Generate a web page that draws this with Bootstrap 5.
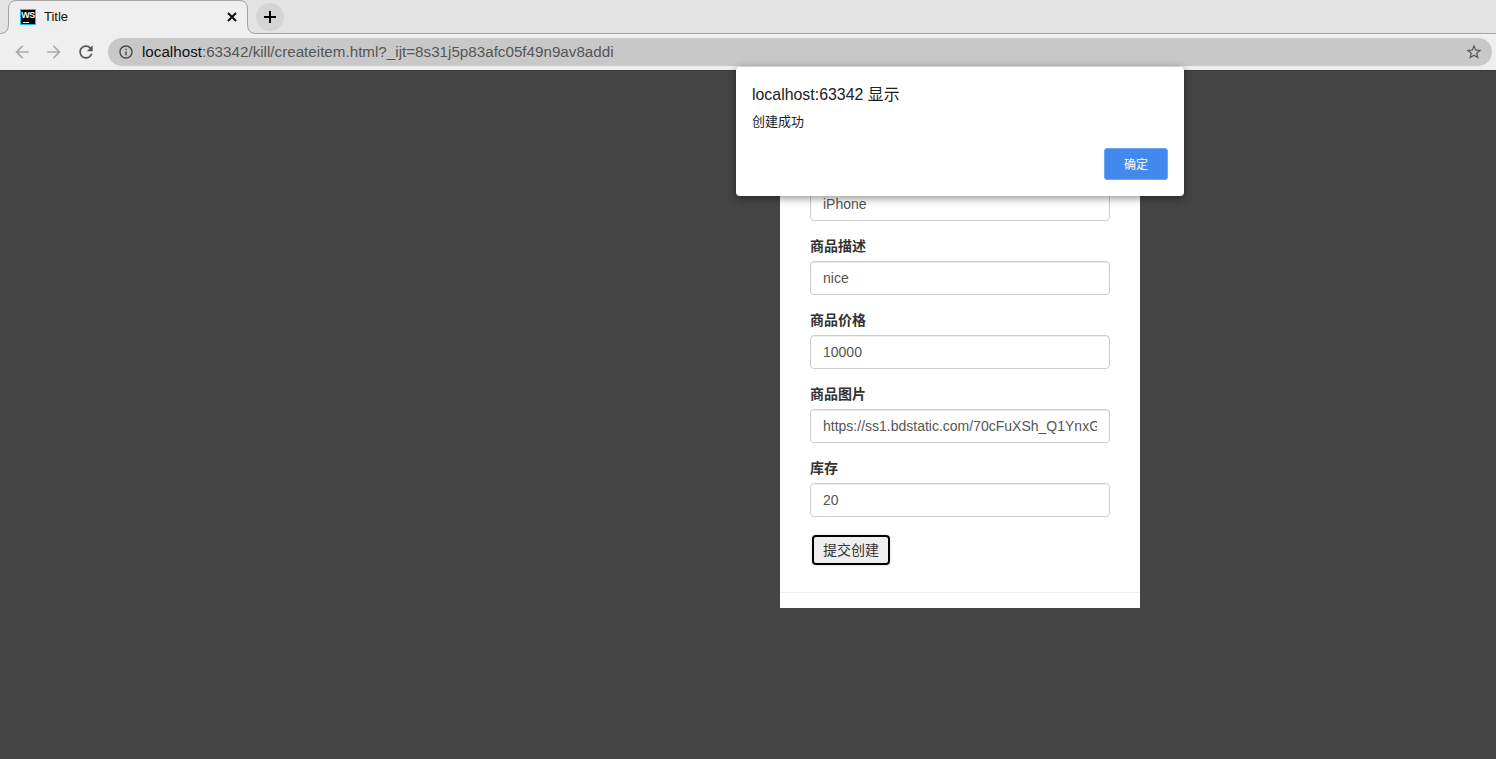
<!DOCTYPE html>
<html lang="zh-CN">

<head>
  <meta charset="UTF-8">
  <meta name="viewport" content="width=device-width, initial-scale=1.0">
  <title>Title</title>
  <link href="https://cdn.jsdelivr.net/npm/bootstrap@5.3.3/dist/css/bootstrap.min.css" rel="stylesheet">
  <style>
    body {
      background: #444;
      font-family: "Liberation Sans", "Noto Sans CJK SC", sans-serif;
      font-size: 14px;
      color: #333;
      overflow: hidden;
    }

    /* browser frame */
    .tab-strip { height: 34px; background: #e3e3e3; padding-left: 0; }
    .strip-tab { position: relative; width: 256px; height: 34px; flex: none; }
    .strip-tab svg.tab-shape { position: absolute; left: 0; top: 0; }
    .strip-rest { flex: 1; height: 34px; border-bottom: 1px solid #a3a3a3; }
    .tab-inner { position: relative; height: 34px; padding: 0 19px 0 20px; }
    .tab-icon {
      width: 16px; height: 16px; background: #000; border: 1px solid #12c3f4; flex: none;
      color: #fff; font-size: 9px; font-weight: 700; line-height: 10px; text-align: center;
      position: relative; letter-spacing: -.4px;
    }
    .tab-icon::after {
      content: ""; position: absolute; left: 2px; bottom: 1px; width: 6px; height: 1px; background: #fff;
    }
    .tab-title { margin-left: 8px; font-size: 13px; color: #111; }
    .tab-new {
      width: 28px; height: 28px; background: #d4d4d4; border-radius: 50%; margin-top: 1px; flex: none;
    }
    .tool-bar { height: 37px; background: #efefef; border-bottom: 1px solid #3a3a3a; padding: 0 4px 0 6px; }
    .tool-btn { width: 32px; flex: none; }
    .url-pill { height: 28px; background: #c8c8c8; border-radius: 14px; margin-left: 6px; padding: 0 9px 0 10px; }
    .url-text { margin-left: 8px; font-size: 15.2px; color: #111; white-space: nowrap; }
    .url-text span { color: #555; }

    /* page */
    .page-body { height: 688px; padding-top: 61px; }
    .form-panel { width: 360px; margin-left: 780px; border: 0; border-radius: 0; }
    .form-panel .card-body { padding: 30px 30px 27px; }
    .form-panel .card-footer { height: 16px; padding: 0; background: #fff; border-top: 1px solid #eee; border-radius: 0; }
    .field-row { margin-bottom: 15px; }
    .field-row .form-label { display: block; margin-bottom: 5px; font-weight: 700; line-height: 20px; font-size: 14px; color: #333; }
    .field-row .form-control {
      height: 34px; padding: 6px 12px; font-size: 14px; line-height: 20px; color: #555;
      border: 1px solid #ccc; border-radius: 4px; box-shadow: inset 0 1px 1px rgba(0, 0, 0, .075);
    }
    .create-btn {
      display: block; width: 78px; height: 30px; margin: 18px 2px 0; padding: 3px 0; font-size: 14px; line-height: 20px;
      color: #333; background: #efefef; border: 2px solid #000; border-radius: 4px; box-shadow: 0 0 0 2px #f5f5f5;
    }

    /* alert dialog */
    .alert-box {
      position: absolute; left: 736px; top: 67px; width: 448px; height: 129px; padding: 16px;
      background: #fff; border-radius: 4px; box-shadow: 0 2px 8px rgba(0, 0, 0, .45); color: #202124;
    }
    .alert-title { font-size: 15.9px; line-height: 22px; margin-top: 1px; }
    .alert-text { font-size: 13px; line-height: 18px; margin-top: 7px; }
    .alert-ok {
      width: 64px; height: 32px; margin-top: 17px; padding: 2px 0 0; font-size: 12px; color: #fff;
      background: #4289ee; border: 1px solid #6ea5f2; border-radius: 3px;
    }
  </style>
</head>

<body>
  <header>
    <div class="tab-strip d-flex">
      <div class="strip-tab">
        <svg class="tab-shape" width="256" height="34" viewBox="0 0 256 34">
          <path d="M0 33.5Q8.5 33.5 8.5 25V9Q8.5 .5 17 .5H239Q247.5 .5 247.5 9V25Q247.5 33.5 256 33.5V34H0Z" fill="#efefef" />
          <path d="M0 33.5Q8.5 33.5 8.5 25V9Q8.5 .5 17 .5H239Q247.5 .5 247.5 9V25Q247.5 33.5 256 33.5" fill="none" stroke="#a3a3a3" />
        </svg>
        <div class="tab-inner d-flex align-items-center">
          <div class="tab-icon">WS</div>
          <div class="tab-title flex-grow-1">Title</div>
          <svg width="10" height="10" viewBox="0 0 10 10">
            <path d="M1 1L9 9M9 1L1 9" stroke="#111" stroke-width="2" />
          </svg>
        </div>
      </div>
      <div class="strip-rest d-flex align-items-center">
        <div class="tab-new d-flex align-items-center justify-content-center">
          <svg width="12" height="12" viewBox="0 0 12 12">
            <path d="M6 0V12M0 6H12" stroke="#000" stroke-width="2" />
          </svg>
        </div>
      </div>
    </div>
    <div class="tool-bar d-flex align-items-center">
      <div class="tool-btn d-flex justify-content-center">
        <svg width="20" height="20" viewBox="0 0 24 24" fill="#aaa">
          <path d="M20 11H7.83l5.59-5.59L12 4l-8 8 8 8 1.41-1.41L7.83 13H20z" />
        </svg>
      </div>
      <div class="tool-btn d-flex justify-content-center">
        <svg width="20" height="20" viewBox="0 0 24 24" fill="#aaa">
          <path d="M4 11h12.17l-5.59-5.59L12 4l8 8-8 8-1.41-1.41L16.17 13H4z" />
        </svg>
      </div>
      <div class="tool-btn d-flex justify-content-center">
        <svg width="20" height="20" viewBox="0 0 24 24" fill="#555">
          <path d="M17.65 6.35C16.2 4.9 14.21 4 12 4c-4.42 0-7.99 3.58-7.99 8s3.57 8 7.99 8c3.73 0 6.84-2.55 7.73-6h-2.08c-.82 2.33-3.04 4-5.65 4-3.31 0-6-2.69-6-6s2.69-6 6-6c1.66 0 3.14.69 4.22 1.78L13 11h7V4l-2.35 2.35z" />
        </svg>
      </div>
      <div class="url-pill d-flex align-items-center flex-grow-1">
        <svg width="16" height="16" viewBox="0 0 24 24" fill="#444">
          <path d="M11 7h2v2h-2zm0 4h2v6h-2zm1-9C6.48 2 2 6.48 2 12s4.48 10 10 10 10-4.48 10-10S17.52 2 12 2zm0 18c-4.41 0-8-3.59-8-8s3.59-8 8-8 8 3.59 8 8-3.59 8-8 8z" />
        </svg>
        <div class="url-text flex-grow-1">localhost<span>:63342/kill/createitem.html?_ijt=8s31j5p83afc05f49n9av8addi</span></div>
        <svg width="18" height="18" viewBox="0 0 24 24" fill="#555">
          <path d="M22 9.24l-7.19-.62L12 2 9.19 8.63 2 9.24l5.46 4.73L5.82 21 12 17.27 18.18 21l-1.63-7.03L22 9.24zM12 15.4l-3.76 2.27 1-4.28-3.32-2.88 4.38-.38L12 6.1l1.71 4.04 4.38.38-3.32 2.88 1 4.28L12 15.4z" />
        </svg>
      </div>
    </div>
  </header>

  <main class="page-body">
    <div class="card form-panel">
      <form class="card-body">
        <div class="field-row">
          <label class="form-label">商品名</label>
          <input type="text" class="form-control" value="iPhone">
        </div>
        <div class="field-row">
          <label class="form-label">商品描述</label>
          <input type="text" class="form-control" value="nice">
        </div>
        <div class="field-row">
          <label class="form-label">商品价格</label>
          <input type="text" class="form-control" value="10000">
        </div>
        <div class="field-row">
          <label class="form-label">商品图片</label>
          <input type="text" class="form-control" value="https://ss1.bdstatic.com/70cFuXSh_Q1YnxGkpoWK1HF6hhy/it/u=1.jpg">
        </div>
        <div class="field-row">
          <label class="form-label">库存</label>
          <input type="text" class="form-control" value="20">
        </div>
        <button type="button" class="btn create-btn">提交创建</button>
      </form>
      <div class="card-footer"></div>
    </div>
  </main>

  <div class="alert-box" role="alertdialog">
    <div class="alert-title">localhost:63342 显示</div>
    <div class="alert-text">创建成功</div>
    <div class="d-flex justify-content-end">
      <button type="button" class="btn btn-primary alert-ok">确定</button>
    </div>
  </div>

  <script src="https://cdn.jsdelivr.net/npm/bootstrap@5.3.3/dist/js/bootstrap.bundle.min.js"></script>
</body>

</html>
